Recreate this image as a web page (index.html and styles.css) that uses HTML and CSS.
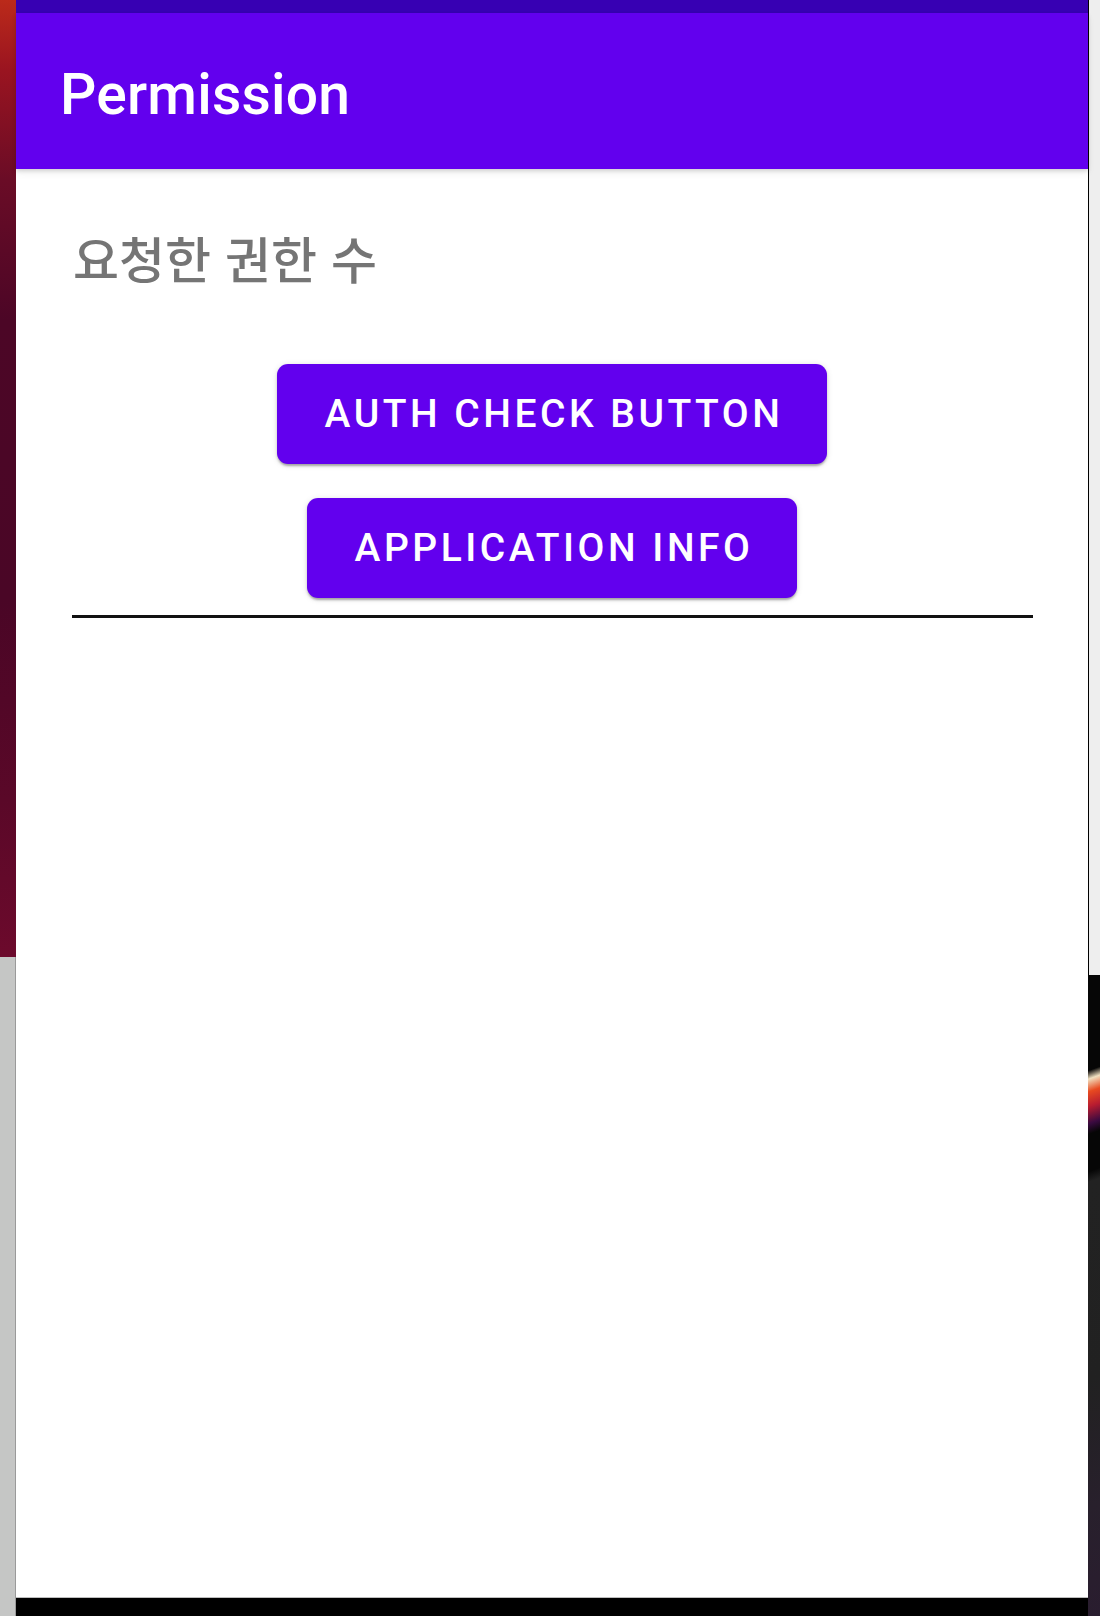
FILE: index.html
```html
<!DOCTYPE html>
<html lang="ko">
<head>
<meta charset="utf-8">
<title>Permission</title>
<link rel="stylesheet" href="styles.css">
</head>
<body>
<div class="desk">
  <div class="edge-left">
    <div class="edge-left-top"></div>
    <div class="edge-left-bottom"></div>
  </div>
  <div class="phone">
    <div class="status-bar"></div>
    <header class="app-bar">
      <h1 class="app-title">Permission</h1>
    </header>
    <main class="content">
      <p class="count-label">요청한 권한 수</p>
      <div class="actions">
        <button class="btn">Auth check button</button>
        <button class="btn">Application info</button>
      </div>
      <div class="divider"></div>
    </main>
    <div class="nav-bar"></div>
  </div>
  <div class="edge-right">
    <div class="edge-right-top"></div>
    <div class="edge-right-bottom"></div>
  </div>
</div>
</body>
</html>
```

FILE: styles.css
```css
html, body {
  margin: 0;
  padding: 0;
}
body {
  width: 1100px;
  height: 1616px;
  overflow: hidden;
  font-family: Roboto, "Noto Sans CJK KR", sans-serif;
}
.desk {
  display: flex;
  width: 1100px;
  height: 1616px;
}
.edge-left {
  width: 16px;
  display: flex;
  flex-direction: column;
}
.edge-left-top {
  height: 957px;
  background: linear-gradient(to bottom, #bb2a1a 0px, #9a1420 70px, #6a0c26 180px, #4c0626 320px, #4a0626 600px, #5a0828 800px, #6c0a2c 957px);
}
.edge-left-bottom {
  flex: 1;
  background: #c5c6c5;
  border-right: 1px solid #9a9a9a;
}
.phone {
  width: 1072px;
  display: flex;
  flex-direction: column;
  background: #fff;
}
.status-bar {
  height: 13px;
  background: #3700b3;
}
.app-bar {
  height: 156px;
  background: #6200ee;
  display: flex;
  align-items: center;
  padding-left: 44px;
  position: relative;
  z-index: 1;
  box-shadow: 0 2px 4px rgba(0,0,0,0.14), 0 4px 8px rgba(0,0,0,0.06);
}
.app-title {
  margin: 0;
  color: #fff;
  font-family: Roboto, sans-serif;
  font-weight: 500;
  font-size: 57px;
  letter-spacing: 0.2px;
  line-height: 1;
  padding-top: 6px;
}
.content {
  flex: 1;
  padding: 0 55px;
  display: flex;
  flex-direction: column;
}
.count-label {
  margin: 56px 0 0 0;
  font-family: "Noto Sans CJK KR", sans-serif;
  font-weight: 500;
  font-size: 50px;
  line-height: 64px;
  color: #757575;
  padding-left: 2px;
}
.actions {
  margin-top: 75px;
  display: flex;
  flex-direction: column;
  align-items: center;
  gap: 34px;
}
.btn {
  height: 100px;
  padding: 0 44px 0 48px;
  border: none;
  border-radius: 11px;
  background: #6200ee;
  color: #fff;
  font-family: Roboto, sans-serif;
  font-weight: 500;
  font-size: 39px;
  letter-spacing: 0.09em;
  text-transform: uppercase;
  box-shadow: 0 3px 2px -1px rgba(0,0,0,0.2), 0 2px 3px rgba(0,0,0,0.14), 0 1px 6px rgba(0,0,0,0.12);
}
.divider {
  margin-top: 17px;
  height: 3px;
  background: #111;
  margin-left: 1px;
}
.nav-bar {
  height: 18px;
  background: #000;
  border-top: 1px solid #bdbdbd;
}
.edge-right {
  width: 12px;
  display: flex;
  flex-direction: column;
}
.edge-right-top {
  height: 975px;
  background: #eeeeee;
  border-left: 1px solid #000;
  box-sizing: border-box;
}
.edge-right-bottom {
  flex: 1;
  background: linear-gradient(160deg, #060606 0px, #060606 90px, #f0e0c0 98px, #e84a20 110px, #b81c30 124px, #3a0a40 140px, #060606 150px, #060606 185px, #222222 195px, #212121 380px, #28202c 500px, #2a1c30 641px);
}
```
